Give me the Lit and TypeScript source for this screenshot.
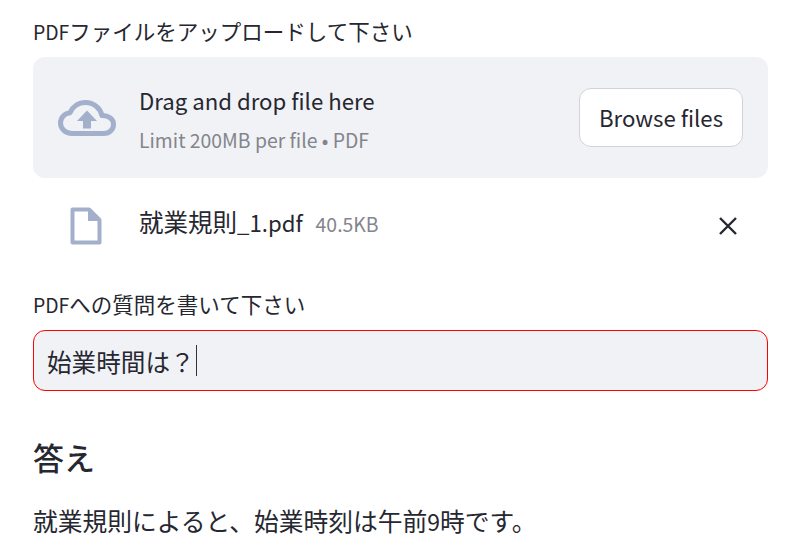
import { LitElement, html, css } from "lit";
import { customElement } from "lit/decorators.js";

@customElement("app-root")
export class AppRoot extends LitElement {
  static styles = css`
    :host {
      display: block;
      width: 800px;
      height: 556px;
      overflow: hidden;
      background: #fff;
      color: #262730;
      font-family: "Noto Sans CJK JP", sans-serif;
    }
    .page {
      display: flex;
      flex-direction: column;
      padding: 16px 32px 0 33px;
    }
    .label {
      font-size: 21.5px;
      line-height: 30px;
      height: 30px;
      white-space: nowrap;
    }
    .lat {
      font-size: 19.4px;
    }
    .drop {
      margin-top: 11px;
      height: 121px;
      box-sizing: border-box;
      background: #f0f2f6;
      border-radius: 12px;
      display: flex;
      align-items: center;
      padding: 0 25px;
    }
    .cloud {
      width: 58px;
      height: 36px;
      flex: none;
    }
    .drop-text {
      margin-left: 23px;
      flex: 1;
      display: flex;
      flex-direction: column;
      gap: 10px;
      margin-top: 2px;
    }
    .drag {
      font-size: 22.2px;
      line-height: 32px;
    }
    .limit {
      font-size: 19.4px;
      line-height: 28px;
      color: #84858c;
    }
    button {
      width: 164px;
      height: 59px;
      box-sizing: border-box;
      background: #fff;
      border: 1.5px solid #d2d3d7;
      border-radius: 12px;
      font: inherit;
      font-size: 22.2px;
      color: #262730;
      padding: 0 0 2px;
    }
    .file {
      display: flex;
      align-items: center;
      height: 96px;
      padding: 0 27px 0 37px;
    }
    .file-icon {
      width: 32px;
      height: 38px;
      flex: none;
    }
    .file-text {
      display: flex;
      align-items: baseline;
      flex: 1;
      margin: 0 0 8px 37px;
    }
    .file-name {
      font-size: 22.2px;
      line-height: 32px;
    }
    .jp {
      font-size: 24.5px;
    }
    .file-size {
      margin-left: 13px;
      font-size: 19.4px;
      color: #84858c;
    }
    .x {
      width: 26px;
      height: 26px;
      flex: none;
    }
    .q {
      margin-top: 15px;
    }
    .input {
      margin-top: 11px;
      height: 61px;
      box-sizing: border-box;
      border: 1.5px solid #f00;
      border-radius: 12px;
      background: #f0f2f6;
      display: flex;
      align-items: center;
      padding: 0 13px;
      font-size: 24.6px;
      color: #262730;
    }
    .caret {
      width: 1px;
      height: 31px;
      background: #31333f;
      margin-left: 1px;
    }
    h2 {
      margin: 43px 0 0;
      font-size: 31px;
      line-height: 46px;
      font-weight: 500;
    }
    p {
      margin: 20px 0 0;
      font-size: 24.75px;
      line-height: 40px;
      white-space: nowrap;
    }
    .p-num {
      font-size: 23px;
    }
  `;

  render() {
    return html`
      <div class="page">
        <div class="label"><span class="lat">PDF</span>ファイルをアップロードして下さい</div>
        <div class="drop">
          <svg class="cloud" viewBox="0 0 58 36" fill="none">
            <path d="M14 33.5C7.5 33.5 2.5 28.8 2.5 23C2.5 17.6 6.7 13.2 12 12.7C14.6 6.6 20.6 2.5 27.5 2.5C35.6 2.5 42.4 8.2 44 15.6C50.2 15.3 55.5 19 55.5 24.4C55.5 29.5 51.2 33.5 46 33.5Z" stroke="#a3b0cc" stroke-width="5" stroke-linejoin="round"/>
            <path d="M29 10.5L39 21H33V28.5H25V21H19Z" fill="#a3b0cc"/>
          </svg>
          <div class="drop-text">
            <div class="drag">Drag and drop file here</div>
            <div class="limit">Limit 200MB per file • PDF</div>
          </div>
          <button>Browse files</button>
        </div>
        <div class="file">
          <svg class="file-icon" viewBox="0 0 32 38" fill="none">
            <path d="M2.5 2.5H19L29.5 13V35.5H2.5Z" stroke="#a3b0cc" stroke-width="4" stroke-linejoin="round"/>
            <path d="M18 2.5V14H29.5Z" fill="#a3b0cc"/>
          </svg>
          <div class="file-text">
            <div class="file-name"><span class="jp">就業規則</span>_1.pdf</div>
            <div class="file-size">40.5KB</div>
          </div>
          <svg class="x" viewBox="0 0 26 26" fill="none">
            <path d="M5 5L21 21M21 5L5 21" stroke="#262730" stroke-width="2.4"/>
          </svg>
        </div>
        <div class="label q"><span class="lat">PDF</span>への質問を書いて下さい</div>
        <div class="input">始業時間は？<span class="caret"></span></div>
        <h2>答え</h2>
        <p>就業規則によると、始業時刻は午前<span class="p-num">9</span>時です。</p>
      </div>
    `;
  }
}
